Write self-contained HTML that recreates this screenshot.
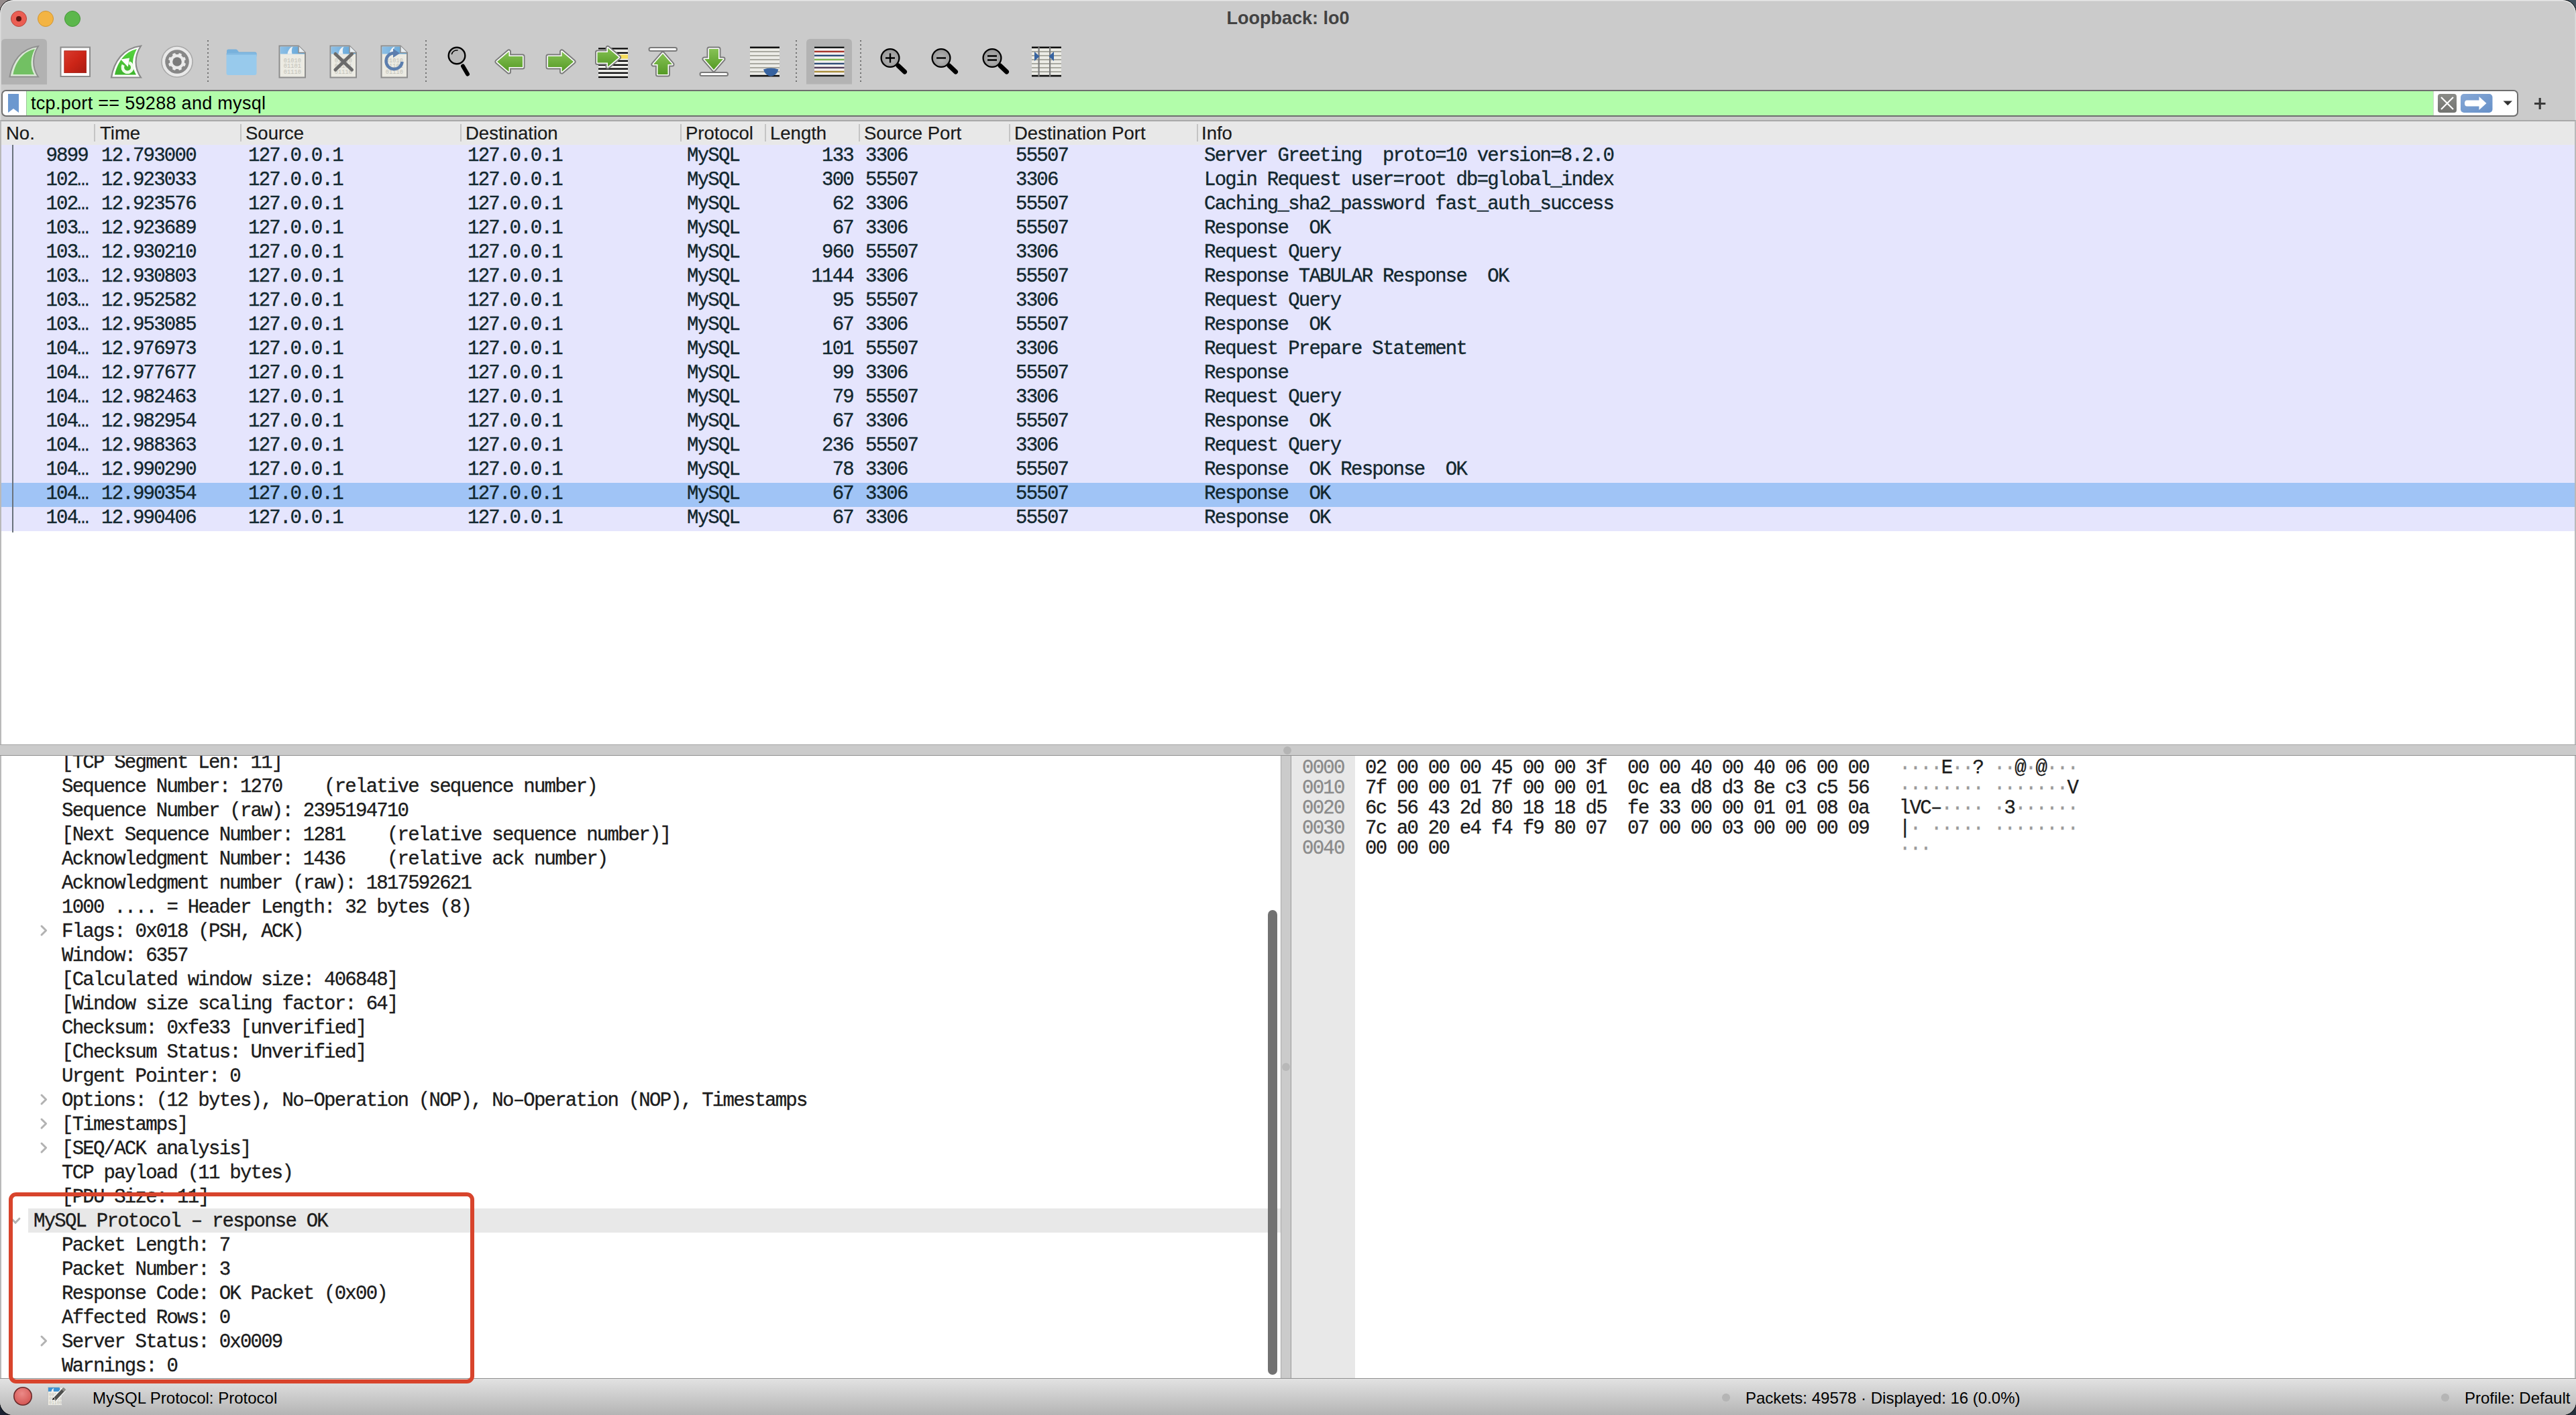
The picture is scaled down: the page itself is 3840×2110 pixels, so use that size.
<!DOCTYPE html><html><head><meta charset="utf-8"><title>Loopback: lo0</title><style>
*{box-sizing:border-box;margin:0;padding:0}
html,body{width:3840px;height:2110px;overflow:hidden;background:#1c2230}
.cn{position:absolute;width:24px;height:24px}
#win{position:absolute;left:0;top:0;width:3840px;height:2110px;border-radius:20px;overflow:hidden;background:#cbcbcb;box-shadow:0 0 0 1px rgba(0,0,0,.85)}
#hl{position:absolute;left:0;top:0;width:3840px;height:179px;border-radius:20px 20px 0 0;box-shadow:inset 0 1.5px 0 rgba(255,255,255,.55),inset 1.5px 0 0 rgba(255,255,255,.35),inset -1.5px 0 0 rgba(255,255,255,.35);pointer-events:none}
.abs{position:absolute}
.sans{font-family:"Liberation Sans",sans-serif}
.mono{font-family:"Liberation Mono",monospace}
#title{position:absolute;left:0;width:3840px;top:10px;height:34px;text-align:center;font:bold 27px/34px "Liberation Sans",sans-serif;color:#424242;letter-spacing:0px}
.tl{position:absolute;top:16px;width:24px;height:24px;border-radius:50%}
.sep{position:absolute;top:60px;width:2px;height:62px;background-image:linear-gradient(#6f6f6f 40%,transparent 40%);background-size:2px 6px}
.icon{position:absolute;top:56px;width:70px;height:70px}
#filter{position:absolute;left:2px;top:134px;width:3752px;height:40px;border:2px solid #6e6e6e;border-radius:7px;background:#fff;overflow:hidden}
#fgreen{position:absolute;left:35px;top:0;width:3589px;border-right:1px solid #c9d9c6;height:36px;background:#b2fdaa;border-left:1px solid #9dc59a}
#ftext{position:absolute;left:46px;top:134px;height:40px;font:27px/40px "Liberation Sans",sans-serif;letter-spacing:0.3px;color:#000}
#plist{position:absolute;left:0;top:179px;width:3840px;height:932px;background:#fff;border-top:2px solid #a9a9a9;border-left:2px solid #b9b9b9;border-right:2px solid #b9b9b9}
#phdr{position:absolute;left:0;top:0;width:3836px;height:35px;background:#e8e8e8}
.hc{position:absolute;top:0;height:35px;font:27.5px/35px "Liberation Sans",sans-serif;color:#1a1a1a;white-space:pre;-webkit-text-stroke:0.2px #1a1a1a}
.hs{position:absolute;top:4px;width:2px;height:26px;background:#c4c4c4}
.row{position:absolute;left:0;width:3836px;height:36px;background:#e5e5fd}
.row.sel{background:#a0c4f6}
.c{position:absolute;top:0;height:36px;font:29px/34px "Liberation Mono",monospace;letter-spacing:-1.76px;color:#12272e;white-space:pre;-webkit-text-stroke:0.35px #12272e}
.r{text-align:right}
#vsplitH{position:absolute;left:0;top:1110px;width:3840px;height:17px;background:#cbcbcb;border-top:1px solid #a4a4a4;border-bottom:1px solid #8f8f8f}
#tree{position:absolute;left:0;top:1127px;width:1909px;height:929px;background:#fff;border-left:2px solid #b9b9b9;overflow:hidden}
.tr{position:absolute;left:0;width:1907px;height:36px;font:29px/36px "Liberation Mono",monospace;letter-spacing:-1.76px;color:#1c1c1c;white-space:pre;-webkit-text-stroke:0.35px #1c1c1c}
#hex{position:absolute;left:1924px;top:1127px;width:1916px;height:929px;background:#fff;border-left:1px solid #9a9a9a;border-right:2px solid #b9b9b9}
#hgut{position:absolute;left:0;top:0;width:95px;height:929px;background:#e8e8e8}
.hx{position:absolute;height:30px;font:29px/30px "Liberation Mono",monospace;letter-spacing:-1.76px;color:#1d1d1d;white-space:pre;-webkit-text-stroke:0.35px currentColor}
#status{position:absolute;left:0;top:2055px;width:3840px;height:55px;background:linear-gradient(#e2e2e2,#b4b4b4);border-top:1px solid #8f8f8f}
.st{position:absolute;font:24px/30px "Liberation Sans",sans-serif;color:#000;white-space:pre}
#anno{position:absolute;left:13px;top:1778px;width:694px;height:285px;border:6px solid #d8442c;border-radius:11px}
</style></head><body><div class="cn" style="left:0;top:0;background:#948a8a"></div><div class="cn" style="right:0;top:0;background:#43525e"></div><div class="cn" style="left:0;bottom:0;background:#1a2232"></div><div class="cn" style="right:0;bottom:0;background:#26323e"></div><div id="win"><div class="tl" style="left:16px;background:#eb5e53;border:1px solid #b5463d"><div style="position:absolute;left:7px;top:7px;width:8px;height:8px;border-radius:50%;background:#5c1510"></div></div><div class="tl" style="left:56px;background:#f3b443;border:1px solid #cf9535"></div><div class="tl" style="left:96px;background:#5cb74c;border:1px solid #46963b"></div><div id="title">Loopback: lo0</div><svg class="abs" style="left:0;top:0" width="1600" height="130" viewBox="0 0 1600 130"><defs>
<linearGradient id="ggreen" x1="0" y1="0" x2="0" y2="1"><stop offset="0" stop-color="#86c255"/><stop offset="1" stop-color="#559a25"/></linearGradient>
<linearGradient id="gred" x1="0" y1="0" x2="1" y2="1"><stop offset="0" stop-color="#d93c2e"/><stop offset="0.5" stop-color="#cc2517"/><stop offset="1" stop-color="#a91b12"/></linearGradient>
<linearGradient id="gblue" x1="0" y1="0" x2="1" y2="0"><stop offset="0" stop-color="#8ec0e6"/><stop offset="1" stop-color="#5fa3d6"/></linearGradient>
<radialGradient id="ggray" cx="0.5" cy="0.55" r="0.6"><stop offset="0" stop-color="#b9b9b9"/><stop offset="1" stop-color="#919191"/></radialGradient>
<linearGradient id="gfin" x1="0" y1="0" x2="0" y2="1"><stop offset="0" stop-color="#55d43f"/><stop offset="1" stop-color="#3fb42e"/></linearGradient>
</defs><path d="M2,126 V64 Q2,58 8,58 H64 Q70,58 70,64 V126 Z" fill="#b2b2b2"/><path d="M14.5,114.5 C18,92 31,72.5 57,69 C48.5,82 47,100 57,114.5 Z" fill="#dbe9d7" stroke="#8f8f8f" stroke-width="2"/><path d="M19.5,111 C23,92.5 34,77 52,73 C45.5,85 44.5,100 51,111 Z" fill="#72c063"/><rect x="90.5" y="70.5" width="43.5" height="43.5" fill="#fff" stroke="#8c8c8c" stroke-width="2"/><rect x="95.8" y="75.8" width="32.8" height="32.8" fill="url(#gred)" stroke="#a3231a" stroke-width="0.8"/><path d="M166,115.5 C170,92 183,72 210,68.5 C200,84 200,101 210,115.5 Z" fill="#fff" stroke="#8a8a8a" stroke-width="2.2"/><path d="M171,111.5 C175,93 186,77 204,73 C196.5,86 196,100 203,111.5 Z" fill="url(#gfin)"/><path d="M183.7,96.9 A7.3,7.3 0 1 0 192.2,93.5" fill="none" stroke="#effde9" stroke-width="4.6"/><path d="M180,88.5 L193,86.5 L190.7,99.7 Z" fill="#fff"/><circle cx="264" cy="92" r="23" fill="#e9e9e9" stroke="#a9a9a9" stroke-width="1.6"/><circle cx="264" cy="92" r="17.8" fill="#878787"/><rect x="261.6" y="78.8" width="4.8" height="5" rx="1.2" fill="#ebebeb" transform="rotate(22.5 264 92)"/><rect x="261.6" y="78.8" width="4.8" height="5" rx="1.2" fill="#ebebeb" transform="rotate(67.5 264 92)"/><rect x="261.6" y="78.8" width="4.8" height="5" rx="1.2" fill="#ebebeb" transform="rotate(112.5 264 92)"/><rect x="261.6" y="78.8" width="4.8" height="5" rx="1.2" fill="#ebebeb" transform="rotate(157.5 264 92)"/><rect x="261.6" y="78.8" width="4.8" height="5" rx="1.2" fill="#ebebeb" transform="rotate(202.5 264 92)"/><rect x="261.6" y="78.8" width="4.8" height="5" rx="1.2" fill="#ebebeb" transform="rotate(247.5 264 92)"/><rect x="261.6" y="78.8" width="4.8" height="5" rx="1.2" fill="#ebebeb" transform="rotate(292.5 264 92)"/><rect x="261.6" y="78.8" width="4.8" height="5" rx="1.2" fill="#ebebeb" transform="rotate(337.5 264 92)"/><circle cx="264" cy="92" r="11" fill="#ebebeb"/><circle cx="264" cy="92" r="6.8" fill="#7b7b7b"/><path d="M338,76 q0,-2.5 2.5,-2.5 h11 q2,0 3,2 l1.5,2 h24 q2.5,0 2.5,2.5 v4 h-44.5 Z" fill="#78b1dc"/><rect x="337.5" y="79.5" width="45" height="32.5" rx="3" fill="#98caec"/><rect x="337.5" y="79.5" width="45" height="2" fill="#80b7e0"/><g>
<path d="M416.5,68.5 h28.5 l10,10 v37 h-38.5 Z" fill="#ecebe3" stroke="#8d8d8d" stroke-width="2"/>
<path d="M417.5,69.5 h27.5 l9,9 v2 h-36.5 Z" fill="url(#gblue)"/>
<path d="M428.5,80.5 c1,-6 4,-10 8,-11 c-2,3 -2,8 -1,11 Z" fill="#eef2f4"/>
<path d="M445.0,68.5 v10 h10" fill="#e8eef2" stroke="#8d8d8d" stroke-width="1.5"/>
<text x="436.0" y="92.5" text-anchor="middle" font-family="Liberation Mono" font-size="8.6" fill="#c2c1b8" letter-spacing="0.1">01010</text>
<text x="436.0" y="101.3" text-anchor="middle" font-family="Liberation Mono" font-size="8.6" fill="#c2c1b8" letter-spacing="0.1">01101</text>
<text x="436.0" y="110.2" text-anchor="middle" font-family="Liberation Mono" font-size="8.6" fill="#c2c1b8" letter-spacing="0.1">01110</text>
</g><g>
<path d="M492.5,68.5 h28.5 l10,10 v37 h-38.5 Z" fill="#ecebe3" stroke="#8d8d8d" stroke-width="2"/>
<path d="M493.5,69.5 h27.5 l9,9 v2 h-36.5 Z" fill="url(#gblue)"/>
<path d="M504.5,80.5 c1,-6 4,-10 8,-11 c-2,3 -2,8 -1,11 Z" fill="#eef2f4"/>
<path d="M521.0,68.5 v10 h10" fill="#e8eef2" stroke="#8d8d8d" stroke-width="1.5"/>
<text x="512.0" y="92.5" text-anchor="middle" font-family="Liberation Mono" font-size="8.6" fill="#c2c1b8" letter-spacing="0.1">01010</text>
<text x="512.0" y="101.3" text-anchor="middle" font-family="Liberation Mono" font-size="8.6" fill="#c2c1b8" letter-spacing="0.1">01101</text>
<text x="512.0" y="110.2" text-anchor="middle" font-family="Liberation Mono" font-size="8.6" fill="#c2c1b8" letter-spacing="0.1">01110</text>
<path d="M500,80.5 L524.5,104 M524.5,80.5 L500,104" stroke="#6b6b6b" stroke-width="5" stroke-linecap="round"/></g><g>
<path d="M568.5,68.5 h28.5 l10,10 v37 h-38.5 Z" fill="#ecebe3" stroke="#8d8d8d" stroke-width="2"/>
<path d="M569.5,69.5 h27.5 l9,9 v2 h-36.5 Z" fill="url(#gblue)"/>
<path d="M580.5,80.5 c1,-6 4,-10 8,-11 c-2,3 -2,8 -1,11 Z" fill="#eef2f4"/>
<path d="M597.0,68.5 v10 h10" fill="#e8eef2" stroke="#8d8d8d" stroke-width="1.5"/>
<text x="588.0" y="92.5" text-anchor="middle" font-family="Liberation Mono" font-size="8.6" fill="#c2c1b8" letter-spacing="0.1">01010</text>
<text x="588.0" y="101.3" text-anchor="middle" font-family="Liberation Mono" font-size="8.6" fill="#c2c1b8" letter-spacing="0.1">01101</text>
<text x="588.0" y="110.2" text-anchor="middle" font-family="Liberation Mono" font-size="8.6" fill="#c2c1b8" letter-spacing="0.1">01110</text>
<path d="M599.5,92 A12,12 0 1 1 588,79" fill="none" stroke="#5c7eae" stroke-width="4.5"/><path d="M586,72.5 L596,79.5 L586,86 Z" fill="#5c7eae"/></g><circle cx="681" cy="83" r="12.3" fill="#b9b9b9" stroke="#000" stroke-width="2.4"/><path d="M673.5,80.5 A8,8 0 0 1 682,75" fill="none" stroke="#000" stroke-width="1.6" stroke-linecap="round"/><line x1="690" y1="98.5" x2="697" y2="110.5" stroke="#000" stroke-width="6" stroke-linecap="round"/><path d="M741,92 L758.5,77 L758.5,84 L779,84 L779,100 L758.5,100 L758.5,107 Z" fill="none" stroke="#7a7a7a" stroke-width="7" stroke-linejoin="round"/><path d="M741,92 L758.5,77 L758.5,84 L779,84 L779,100 L758.5,100 L758.5,107 Z" fill="none" stroke="#fff" stroke-width="3.2" stroke-linejoin="round"/><path d="M741,92 L758.5,77 L758.5,84 L779,84 L779,100 L758.5,100 L758.5,107 Z" fill="url(#ggreen)"/><path d="M855,92 L837.5,77 L837.5,84 L817,84 L817,100 L837.5,100 L837.5,107 Z" fill="none" stroke="#7a7a7a" stroke-width="7" stroke-linejoin="round"/><path d="M855,92 L837.5,77 L837.5,84 L817,84 L817,100 L837.5,100 L837.5,107 Z" fill="none" stroke="#fff" stroke-width="3.2" stroke-linejoin="round"/><path d="M855,92 L837.5,77 L837.5,84 L817,84 L817,100 L837.5,100 L837.5,107 Z" fill="url(#ggreen)"/><rect x="892" y="72" width="44" height="43.5" fill="#ebebe7"/><rect x="892" y="71.4" width="44" height="2.2" fill="#000"/><rect x="892" y="77.80000000000001" width="44" height="2.2" fill="#000"/><rect x="892" y="83.60000000000001" width="44" height="2.2" fill="#000"/><rect x="892" y="89.80000000000001" width="44" height="2.2" fill="#000"/><rect x="892" y="95.80000000000001" width="44" height="2.2" fill="#000"/><rect x="892" y="101.60000000000001" width="44" height="2.2" fill="#000"/><rect x="892" y="107.7" width="44" height="2.2" fill="#000"/><rect x="892" y="113.9" width="44" height="2.2" fill="#000"/><rect x="918" y="81.5" width="18" height="6" fill="#f6dd5a"/><path d="M922.5,85.5 L906,71.5 L906,78 L890.5,78 L890.5,93.5 L906,93.5 L906,99.5 Z" fill="none" stroke="#7a7a7a" stroke-width="7" stroke-linejoin="round"/><path d="M922.5,85.5 L906,71.5 L906,78 L890.5,78 L890.5,93.5 L906,93.5 L906,99.5 Z" fill="none" stroke="#fff" stroke-width="3.2" stroke-linejoin="round"/><path d="M922.5,85.5 L906,71.5 L906,78 L890.5,78 L890.5,93.5 L906,93.5 L906,99.5 Z" fill="url(#ggreen)"/><rect x="967.5" y="71" width="41.5" height="5" rx="2.5" fill="#fff" stroke="#7a7a7a" stroke-width="2"/><path d="M988,80 L974,96 L980.5,96 L980.5,111 L995.5,111 L995.5,96 L1002,96 Z" fill="none" stroke="#7a7a7a" stroke-width="7" stroke-linejoin="round"/><path d="M988,80 L974,96 L980.5,96 L980.5,111 L995.5,111 L995.5,96 L1002,96 Z" fill="none" stroke="#fff" stroke-width="3.2" stroke-linejoin="round"/><path d="M988,80 L974,96 L980.5,96 L980.5,111 L995.5,111 L995.5,96 L1002,96 Z" fill="url(#ggreen)"/><path d="M1064,104 L1050,88 L1057,88 L1057,73 L1071,73 L1071,88 L1078,88 Z" fill="none" stroke="#7a7a7a" stroke-width="7" stroke-linejoin="round"/><path d="M1064,104 L1050,88 L1057,88 L1057,73 L1071,73 L1071,88 L1078,88 Z" fill="none" stroke="#fff" stroke-width="3.2" stroke-linejoin="round"/><path d="M1064,104 L1050,88 L1057,88 L1057,73 L1071,73 L1071,88 L1078,88 Z" fill="url(#ggreen)"/><rect x="1043.5" y="108" width="41.5" height="5" rx="2.5" fill="#fff" stroke="#7a7a7a" stroke-width="2"/><rect x="1118" y="70" width="44" height="44" fill="#ecece7"/><rect x="1118" y="69.5" width="44" height="2.6" fill="#111"/><rect x="1118" y="111.8" width="44" height="2.6" fill="#111"/><rect x="1118" y="76" width="44" height="2" fill="#a9a9a0"/><rect x="1118" y="82" width="44" height="2" fill="#a9a9a0"/><rect x="1118" y="88" width="44" height="2" fill="#a9a9a0"/><rect x="1118" y="94" width="44" height="2" fill="#a9a9a0"/><rect x="1118" y="100" width="44" height="2" fill="#a9a9a0"/><rect x="1118" y="106" width="44" height="2" fill="#a9a9a0"/><path d="M1138,103.5 Q1149,99.5 1160.5,103.5 Q1158,112.5 1149.2,113.8 Q1140.5,112.5 1138,103.5 Z" fill="#3763a0"/><path d="M1202,125.5 V64 Q1202,58 1208,58 H1264 Q1270,58 1270,64 V125.5 Z" fill="#b3b3b3"/><rect x="1214" y="70" width="44.5" height="44" fill="#f3f0f0"/><rect x="1214" y="69.6" width="44.5" height="2.4" fill="#161a1a"/><rect x="1214" y="75.7" width="44.5" height="2.4" fill="#a8352b"/><rect x="1214" y="81.7" width="44.5" height="2.4" fill="#2d4b76"/><rect x="1214" y="87.7" width="44.5" height="2.4" fill="#7db44c"/><rect x="1214" y="93.7" width="44.5" height="2.4" fill="#2d4b76"/><rect x="1214" y="99.7" width="44.5" height="2.4" fill="#4d3c58"/><rect x="1214" y="105.7" width="44.5" height="2.4" fill="#a98e3a"/><rect x="1214" y="111.7" width="44.5" height="2.4" fill="#161a1a"/><circle cx="1327" cy="86.5" r="13.4" fill="url(#ggray)" stroke="#000" stroke-width="2.3"/>
<line x1="1339" y1="98.0" x2="1348.5" y2="107.0" stroke="#000" stroke-width="7" stroke-linecap="round"/><path d="M1320,86.5 h14 M1327,79.5 v14" stroke="#000" stroke-width="2.4"/><circle cx="1403" cy="86.5" r="13.4" fill="url(#ggray)" stroke="#000" stroke-width="2.3"/>
<line x1="1415" y1="98.0" x2="1424.5" y2="107.0" stroke="#000" stroke-width="7" stroke-linecap="round"/><path d="M1396,86.5 h14" stroke="#000" stroke-width="2.4"/><circle cx="1479" cy="86.5" r="13.4" fill="url(#ggray)" stroke="#000" stroke-width="2.3"/>
<line x1="1491" y1="98.0" x2="1500.5" y2="107.0" stroke="#000" stroke-width="7" stroke-linecap="round"/><path d="M1472,83.5 h14 M1472,89.5 h14" stroke="#000" stroke-width="2.4"/><rect x="1538" y="70" width="44" height="44" fill="#ecece7"/><rect x="1538" y="76" width="44" height="2" fill="#a9a9a0"/><rect x="1538" y="82" width="44" height="2" fill="#a9a9a0"/><rect x="1538" y="88" width="44" height="2" fill="#a9a9a0"/><rect x="1538" y="94" width="44" height="2" fill="#a9a9a0"/><rect x="1538" y="100" width="44" height="2" fill="#a9a9a0"/><rect x="1538" y="106" width="44" height="2" fill="#a9a9a0"/><rect x="1538" y="69.5" width="44" height="2.6" fill="#111"/><rect x="1538" y="111.8" width="44" height="2.6" fill="#111"/><rect x="1547.5" y="70" width="2.2" height="44" fill="#7d7d7d"/><rect x="1564" y="70" width="2.2" height="44" fill="#7d7d7d"/><path d="M1542,77 L1549.5,84 L1542,91 Z" fill="#3763a0"/><path d="M1571,77 L1563.5,84 L1571,91 Z" fill="#3763a0"/></svg><div class="sep" style="left:309px"></div><div class="sep" style="left:634px"></div><div class="sep" style="left:1186px"></div><div class="sep" style="left:1282px"></div><div id="filter"><div id="fgreen"></div></div><svg class="abs" style="left:0;top:130px" width="60" height="50"><path d="M12,10 h16 v28 l-8,-6 l-8,6 Z" fill="#6c98cf"/></svg><div id="ftext">tcp.port == 59288 and mysql</div><svg class="abs" style="left:3620px;top:130px" width="220" height="50" viewBox="3620 130 220 50">
<defs><linearGradient id="gx" x1="0" y1="0" x2="0" y2="1"><stop offset="0" stop-color="#8a8b87"/><stop offset="1" stop-color="#727370"/></linearGradient>
<linearGradient id="ga" x1="0" y1="0" x2="1" y2="1"><stop offset="0" stop-color="#86a8d6"/><stop offset="1" stop-color="#6690c8"/></linearGradient></defs>
<rect x="3634" y="140" width="28" height="28" rx="4" fill="url(#gx)"/>
<path d="M3639,145 L3657,163 M3657,145 L3639,163" stroke="#fff" stroke-width="2.2"/>
<rect x="3668" y="140" width="47.5" height="28" rx="5" fill="url(#ga)"/>
<path d="M3677.5,149.5 h18 v-5.5 l11,10 l-11,10 v-5.5 h-18 q-3.5,0 -3.5,-4.5 q0,-4.5 3.5,-4.5 Z" fill="#fff"/>
<path d="M3731.5,150.5 h13.5 l-6.75,6.8 Z" fill="#333"/>
<path d="M3778,154.5 h16.5 M3786.2,146 v17" stroke="#3a3a3a" stroke-width="3.2"/>
</svg><div id="plist"><div id="phdr"><div class="hc" style="left:7px">No.</div><div class="hc" style="left:147px">Time</div><div class="hs" style="left:138px"></div><div class="hc" style="left:364px">Source</div><div class="hs" style="left:356px"></div><div class="hc" style="left:692px">Destination</div><div class="hs" style="left:684px"></div><div class="hc" style="left:1020px">Protocol</div><div class="hs" style="left:1012px"></div><div class="hc" style="left:1146px">Length</div><div class="hs" style="left:1138px"></div><div class="hc" style="left:1286px">Source Port</div><div class="hs" style="left:1278px"></div><div class="hc" style="left:1510px">Destination Port</div><div class="hs" style="left:1502px"></div><div class="hc" style="left:1789px">Info</div><div class="hs" style="left:1782px"></div></div><div class="row" style="top:35px"><div class="c r" style="left:0;width:129px">9899</div><div class="c" style="left:149px">12.793000</div><div class="c" style="left:368px">127.0.0.1</div><div class="c" style="left:695px">127.0.0.1</div><div class="c" style="left:1022px">MySQL</div><div class="c r" style="left:1141px;width:129px">133</div><div class="c" style="left:1288px">3306</div><div class="c" style="left:1512px">55507</div><div class="c" style="left:1793px">Server Greeting  proto=10 version=8.2.0</div></div><div class="row" style="top:71px"><div class="c r" style="left:0;width:129px">102…</div><div class="c" style="left:149px">12.923033</div><div class="c" style="left:368px">127.0.0.1</div><div class="c" style="left:695px">127.0.0.1</div><div class="c" style="left:1022px">MySQL</div><div class="c r" style="left:1141px;width:129px">300</div><div class="c" style="left:1288px">55507</div><div class="c" style="left:1512px">3306</div><div class="c" style="left:1793px">Login Request user=root db=global_index</div></div><div class="row" style="top:107px"><div class="c r" style="left:0;width:129px">102…</div><div class="c" style="left:149px">12.923576</div><div class="c" style="left:368px">127.0.0.1</div><div class="c" style="left:695px">127.0.0.1</div><div class="c" style="left:1022px">MySQL</div><div class="c r" style="left:1141px;width:129px">62</div><div class="c" style="left:1288px">3306</div><div class="c" style="left:1512px">55507</div><div class="c" style="left:1793px">Caching_sha2_password fast_auth_success</div></div><div class="row" style="top:143px"><div class="c r" style="left:0;width:129px">103…</div><div class="c" style="left:149px">12.923689</div><div class="c" style="left:368px">127.0.0.1</div><div class="c" style="left:695px">127.0.0.1</div><div class="c" style="left:1022px">MySQL</div><div class="c r" style="left:1141px;width:129px">67</div><div class="c" style="left:1288px">3306</div><div class="c" style="left:1512px">55507</div><div class="c" style="left:1793px">Response  OK</div></div><div class="row" style="top:179px"><div class="c r" style="left:0;width:129px">103…</div><div class="c" style="left:149px">12.930210</div><div class="c" style="left:368px">127.0.0.1</div><div class="c" style="left:695px">127.0.0.1</div><div class="c" style="left:1022px">MySQL</div><div class="c r" style="left:1141px;width:129px">960</div><div class="c" style="left:1288px">55507</div><div class="c" style="left:1512px">3306</div><div class="c" style="left:1793px">Request Query</div></div><div class="row" style="top:215px"><div class="c r" style="left:0;width:129px">103…</div><div class="c" style="left:149px">12.930803</div><div class="c" style="left:368px">127.0.0.1</div><div class="c" style="left:695px">127.0.0.1</div><div class="c" style="left:1022px">MySQL</div><div class="c r" style="left:1141px;width:129px">1144</div><div class="c" style="left:1288px">3306</div><div class="c" style="left:1512px">55507</div><div class="c" style="left:1793px">Response TABULAR Response  OK</div></div><div class="row" style="top:251px"><div class="c r" style="left:0;width:129px">103…</div><div class="c" style="left:149px">12.952582</div><div class="c" style="left:368px">127.0.0.1</div><div class="c" style="left:695px">127.0.0.1</div><div class="c" style="left:1022px">MySQL</div><div class="c r" style="left:1141px;width:129px">95</div><div class="c" style="left:1288px">55507</div><div class="c" style="left:1512px">3306</div><div class="c" style="left:1793px">Request Query</div></div><div class="row" style="top:287px"><div class="c r" style="left:0;width:129px">103…</div><div class="c" style="left:149px">12.953085</div><div class="c" style="left:368px">127.0.0.1</div><div class="c" style="left:695px">127.0.0.1</div><div class="c" style="left:1022px">MySQL</div><div class="c r" style="left:1141px;width:129px">67</div><div class="c" style="left:1288px">3306</div><div class="c" style="left:1512px">55507</div><div class="c" style="left:1793px">Response  OK</div></div><div class="row" style="top:323px"><div class="c r" style="left:0;width:129px">104…</div><div class="c" style="left:149px">12.976973</div><div class="c" style="left:368px">127.0.0.1</div><div class="c" style="left:695px">127.0.0.1</div><div class="c" style="left:1022px">MySQL</div><div class="c r" style="left:1141px;width:129px">101</div><div class="c" style="left:1288px">55507</div><div class="c" style="left:1512px">3306</div><div class="c" style="left:1793px">Request Prepare Statement</div></div><div class="row" style="top:359px"><div class="c r" style="left:0;width:129px">104…</div><div class="c" style="left:149px">12.977677</div><div class="c" style="left:368px">127.0.0.1</div><div class="c" style="left:695px">127.0.0.1</div><div class="c" style="left:1022px">MySQL</div><div class="c r" style="left:1141px;width:129px">99</div><div class="c" style="left:1288px">3306</div><div class="c" style="left:1512px">55507</div><div class="c" style="left:1793px">Response</div></div><div class="row" style="top:395px"><div class="c r" style="left:0;width:129px">104…</div><div class="c" style="left:149px">12.982463</div><div class="c" style="left:368px">127.0.0.1</div><div class="c" style="left:695px">127.0.0.1</div><div class="c" style="left:1022px">MySQL</div><div class="c r" style="left:1141px;width:129px">79</div><div class="c" style="left:1288px">55507</div><div class="c" style="left:1512px">3306</div><div class="c" style="left:1793px">Request Query</div></div><div class="row" style="top:431px"><div class="c r" style="left:0;width:129px">104…</div><div class="c" style="left:149px">12.982954</div><div class="c" style="left:368px">127.0.0.1</div><div class="c" style="left:695px">127.0.0.1</div><div class="c" style="left:1022px">MySQL</div><div class="c r" style="left:1141px;width:129px">67</div><div class="c" style="left:1288px">3306</div><div class="c" style="left:1512px">55507</div><div class="c" style="left:1793px">Response  OK</div></div><div class="row" style="top:467px"><div class="c r" style="left:0;width:129px">104…</div><div class="c" style="left:149px">12.988363</div><div class="c" style="left:368px">127.0.0.1</div><div class="c" style="left:695px">127.0.0.1</div><div class="c" style="left:1022px">MySQL</div><div class="c r" style="left:1141px;width:129px">236</div><div class="c" style="left:1288px">55507</div><div class="c" style="left:1512px">3306</div><div class="c" style="left:1793px">Request Query</div></div><div class="row" style="top:503px"><div class="c r" style="left:0;width:129px">104…</div><div class="c" style="left:149px">12.990290</div><div class="c" style="left:368px">127.0.0.1</div><div class="c" style="left:695px">127.0.0.1</div><div class="c" style="left:1022px">MySQL</div><div class="c r" style="left:1141px;width:129px">78</div><div class="c" style="left:1288px">3306</div><div class="c" style="left:1512px">55507</div><div class="c" style="left:1793px">Response  OK Response  OK</div></div><div class="row sel" style="top:539px"><div class="c r" style="left:0;width:129px">104…</div><div class="c" style="left:149px">12.990354</div><div class="c" style="left:368px">127.0.0.1</div><div class="c" style="left:695px">127.0.0.1</div><div class="c" style="left:1022px">MySQL</div><div class="c r" style="left:1141px;width:129px">67</div><div class="c" style="left:1288px">3306</div><div class="c" style="left:1512px">55507</div><div class="c" style="left:1793px">Response  OK</div></div><div class="row" style="top:575px"><div class="c r" style="left:0;width:129px">104…</div><div class="c" style="left:149px">12.990406</div><div class="c" style="left:368px">127.0.0.1</div><div class="c" style="left:695px">127.0.0.1</div><div class="c" style="left:1022px">MySQL</div><div class="c r" style="left:1141px;width:129px">67</div><div class="c" style="left:1288px">3306</div><div class="c" style="left:1512px">55507</div><div class="c" style="left:1793px">Response  OK</div></div><div class="abs" style="left:16px;top:35px;width:2px;height:578px;background:#6a737c"></div></div><div id="vsplitH"><div class="abs" style="left:1913px;top:2px;width:12px;height:12px;border-radius:50%;background:#b4b4b4"></div></div><div id="tree"><div class="tr" style="left:90px;top:-7px">[TCP Segment Len: 11]</div><div class="tr" style="left:90px;top:29px">Sequence Number: 1270    (relative sequence number)</div><div class="tr" style="left:90px;top:65px">Sequence Number (raw): 2395194710</div><div class="tr" style="left:90px;top:101px">[Next Sequence Number: 1281    (relative sequence number)]</div><div class="tr" style="left:90px;top:137px">Acknowledgment Number: 1436    (relative ack number)</div><div class="tr" style="left:90px;top:173px">Acknowledgment number (raw): 1817592621</div><div class="tr" style="left:90px;top:209px">1000 .... = Header Length: 32 bytes (8)</div><svg class="abs" style="left:54px;top:243px" width="24" height="36"><path d="M6,11 L12.6,17.5 L6,24" fill="none" stroke="#b2b2b2" stroke-width="3" stroke-linecap="round" stroke-linejoin="round"/></svg><div class="tr" style="left:90px;top:245px">Flags: 0x018 (PSH, ACK)</div><div class="tr" style="left:90px;top:281px">Window: 6357</div><div class="tr" style="left:90px;top:317px">[Calculated window size: 406848]</div><div class="tr" style="left:90px;top:353px">[Window size scaling factor: 64]</div><div class="tr" style="left:90px;top:389px">Checksum: 0xfe33 [unverified]</div><div class="tr" style="left:90px;top:425px">[Checksum Status: Unverified]</div><div class="tr" style="left:90px;top:461px">Urgent Pointer: 0</div><svg class="abs" style="left:54px;top:495px" width="24" height="36"><path d="M6,11 L12.6,17.5 L6,24" fill="none" stroke="#b2b2b2" stroke-width="3" stroke-linecap="round" stroke-linejoin="round"/></svg><div class="tr" style="left:90px;top:497px">Options: (12 bytes), No–Operation (NOP), No–Operation (NOP), Timestamps</div><svg class="abs" style="left:54px;top:531px" width="24" height="36"><path d="M6,11 L12.6,17.5 L6,24" fill="none" stroke="#b2b2b2" stroke-width="3" stroke-linecap="round" stroke-linejoin="round"/></svg><div class="tr" style="left:90px;top:533px">[Timestamps]</div><svg class="abs" style="left:54px;top:567px" width="24" height="36"><path d="M6,11 L12.6,17.5 L6,24" fill="none" stroke="#b2b2b2" stroke-width="3" stroke-linecap="round" stroke-linejoin="round"/></svg><div class="tr" style="left:90px;top:569px">[SEQ/ACK analysis]</div><div class="tr" style="left:90px;top:605px">TCP payload (11 bytes)</div><div class="tr" style="left:90px;top:641px">[PDU Size: 11]</div><div class="abs" style="left:40px;top:675px;width:1867px;height:36px;background:#e8e8e8"></div><svg class="abs" style="left:14px;top:675px" width="24" height="36"><path d="M1.2,15.2 L7,21.3 L12.8,15.2" fill="none" stroke="#b2b2b2" stroke-width="3" stroke-linecap="round" stroke-linejoin="round"/></svg><div class="tr" style="left:48px;top:677px">MySQL Protocol – response OK</div><div class="tr" style="left:90px;top:713px">Packet Length: 7</div><div class="tr" style="left:90px;top:749px">Packet Number: 3</div><div class="tr" style="left:90px;top:785px">Response Code: OK Packet (0x00)</div><div class="tr" style="left:90px;top:821px">Affected Rows: 0</div><svg class="abs" style="left:54px;top:855px" width="24" height="36"><path d="M6,11 L12.6,17.5 L6,24" fill="none" stroke="#b2b2b2" stroke-width="3" stroke-linecap="round" stroke-linejoin="round"/></svg><div class="tr" style="left:90px;top:857px">Server Status: 0x0009</div><div class="tr" style="left:90px;top:893px">Warnings: 0</div><div class="abs" style="left:1888px;top:230px;width:14px;height:693px;border-radius:7px;background:#727272"></div></div><div class="abs" style="left:1909px;top:1127px;width:15px;height:928px;background:#cbcbcb;border-left:1px solid #a8a8a8"><div class="abs" style="left:1px;top:458px;width:12px;height:12px;border-radius:50%;background:#b8b8b8"></div></div><div id="hex"><div id="hgut"></div><div class="hx" style="left:16px;top:4px;color:#8a8a8a">0000</div><div class="hx" style="left:110px;top:4px">02 00 00 00 45 00 00 3f  00 00 40 00 40 06 00 00</div><div class="hx" style="left:906px;top:4px"><span style="color:#9a9a9a;-webkit-text-stroke:0.3px #9a9a9a">·</span><span style="color:#9a9a9a;-webkit-text-stroke:0.3px #9a9a9a">·</span><span style="color:#9a9a9a;-webkit-text-stroke:0.3px #9a9a9a">·</span><span style="color:#9a9a9a;-webkit-text-stroke:0.3px #9a9a9a">·</span>E<span style="color:#9a9a9a;-webkit-text-stroke:0.3px #9a9a9a">·</span><span style="color:#9a9a9a;-webkit-text-stroke:0.3px #9a9a9a">·</span>? <span style="color:#9a9a9a;-webkit-text-stroke:0.3px #9a9a9a">·</span><span style="color:#9a9a9a;-webkit-text-stroke:0.3px #9a9a9a">·</span>@<span style="color:#9a9a9a;-webkit-text-stroke:0.3px #9a9a9a">·</span>@<span style="color:#9a9a9a;-webkit-text-stroke:0.3px #9a9a9a">·</span><span style="color:#9a9a9a;-webkit-text-stroke:0.3px #9a9a9a">·</span><span style="color:#9a9a9a;-webkit-text-stroke:0.3px #9a9a9a">·</span></div><div class="hx" style="left:16px;top:34px;color:#8a8a8a">0010</div><div class="hx" style="left:110px;top:34px">7f 00 00 01 7f 00 00 01  0c ea d8 d3 8e c3 c5 56</div><div class="hx" style="left:906px;top:34px"><span style="color:#9a9a9a;-webkit-text-stroke:0.3px #9a9a9a">·</span><span style="color:#9a9a9a;-webkit-text-stroke:0.3px #9a9a9a">·</span><span style="color:#9a9a9a;-webkit-text-stroke:0.3px #9a9a9a">·</span><span style="color:#9a9a9a;-webkit-text-stroke:0.3px #9a9a9a">·</span><span style="color:#9a9a9a;-webkit-text-stroke:0.3px #9a9a9a">·</span><span style="color:#9a9a9a;-webkit-text-stroke:0.3px #9a9a9a">·</span><span style="color:#9a9a9a;-webkit-text-stroke:0.3px #9a9a9a">·</span><span style="color:#9a9a9a;-webkit-text-stroke:0.3px #9a9a9a">·</span> <span style="color:#9a9a9a;-webkit-text-stroke:0.3px #9a9a9a">·</span><span style="color:#9a9a9a;-webkit-text-stroke:0.3px #9a9a9a">·</span><span style="color:#9a9a9a;-webkit-text-stroke:0.3px #9a9a9a">·</span><span style="color:#9a9a9a;-webkit-text-stroke:0.3px #9a9a9a">·</span><span style="color:#9a9a9a;-webkit-text-stroke:0.3px #9a9a9a">·</span><span style="color:#9a9a9a;-webkit-text-stroke:0.3px #9a9a9a">·</span><span style="color:#9a9a9a;-webkit-text-stroke:0.3px #9a9a9a">·</span>V</div><div class="hx" style="left:16px;top:64px;color:#8a8a8a">0020</div><div class="hx" style="left:110px;top:64px">6c 56 43 2d 80 18 18 d5  fe 33 00 00 01 01 08 0a</div><div class="hx" style="left:906px;top:64px">lVC–<span style="color:#9a9a9a;-webkit-text-stroke:0.3px #9a9a9a">·</span><span style="color:#9a9a9a;-webkit-text-stroke:0.3px #9a9a9a">·</span><span style="color:#9a9a9a;-webkit-text-stroke:0.3px #9a9a9a">·</span><span style="color:#9a9a9a;-webkit-text-stroke:0.3px #9a9a9a">·</span> <span style="color:#9a9a9a;-webkit-text-stroke:0.3px #9a9a9a">·</span>3<span style="color:#9a9a9a;-webkit-text-stroke:0.3px #9a9a9a">·</span><span style="color:#9a9a9a;-webkit-text-stroke:0.3px #9a9a9a">·</span><span style="color:#9a9a9a;-webkit-text-stroke:0.3px #9a9a9a">·</span><span style="color:#9a9a9a;-webkit-text-stroke:0.3px #9a9a9a">·</span><span style="color:#9a9a9a;-webkit-text-stroke:0.3px #9a9a9a">·</span><span style="color:#9a9a9a;-webkit-text-stroke:0.3px #9a9a9a">·</span></div><div class="hx" style="left:16px;top:94px;color:#8a8a8a">0030</div><div class="hx" style="left:110px;top:94px">7c a0 20 e4 f4 f9 80 07  07 00 00 03 00 00 00 09</div><div class="hx" style="left:906px;top:94px">|<span style="color:#9a9a9a;-webkit-text-stroke:0.3px #9a9a9a">·</span> <span style="color:#9a9a9a;-webkit-text-stroke:0.3px #9a9a9a">·</span><span style="color:#9a9a9a;-webkit-text-stroke:0.3px #9a9a9a">·</span><span style="color:#9a9a9a;-webkit-text-stroke:0.3px #9a9a9a">·</span><span style="color:#9a9a9a;-webkit-text-stroke:0.3px #9a9a9a">·</span><span style="color:#9a9a9a;-webkit-text-stroke:0.3px #9a9a9a">·</span> <span style="color:#9a9a9a;-webkit-text-stroke:0.3px #9a9a9a">·</span><span style="color:#9a9a9a;-webkit-text-stroke:0.3px #9a9a9a">·</span><span style="color:#9a9a9a;-webkit-text-stroke:0.3px #9a9a9a">·</span><span style="color:#9a9a9a;-webkit-text-stroke:0.3px #9a9a9a">·</span><span style="color:#9a9a9a;-webkit-text-stroke:0.3px #9a9a9a">·</span><span style="color:#9a9a9a;-webkit-text-stroke:0.3px #9a9a9a">·</span><span style="color:#9a9a9a;-webkit-text-stroke:0.3px #9a9a9a">·</span><span style="color:#9a9a9a;-webkit-text-stroke:0.3px #9a9a9a">·</span></div><div class="hx" style="left:16px;top:124px;color:#8a8a8a">0040</div><div class="hx" style="left:110px;top:124px">00 00 00</div><div class="hx" style="left:906px;top:124px"><span style="color:#9a9a9a;-webkit-text-stroke:0.3px #9a9a9a">·</span><span style="color:#9a9a9a;-webkit-text-stroke:0.3px #9a9a9a">·</span><span style="color:#9a9a9a;-webkit-text-stroke:0.3px #9a9a9a">·</span></div></div><div id="status"></div><svg class="abs" style="left:0;top:2056px" width="120" height="54"><defs><radialGradient id="grc" cx="0.45" cy="0.35" r="0.7"><stop offset="0" stop-color="#eb8a88"/><stop offset="1" stop-color="#d2524f"/></radialGradient></defs><circle cx="34" cy="26" r="13.2" fill="url(#grc)" stroke="#6a2b2b" stroke-width="1.6"/><rect x="71.5" y="12.5" width="21" height="27" fill="#efeee8" stroke="#c4c4c4" stroke-width="1"/><path d="M72,13 h16 q1.5,0 1.5,1.5 v4.5 h-17.5 Z" fill="#3f92d2"/><path d="M76.5,19 c0.5,-3 2,-4.5 4,-5 c-1,1.5 -1,3.5 -0.5,5 Z" fill="#eef2f4"/><text x="73" y="26" font-family="Liberation Mono" font-size="6.5" fill="#bdbdb5">00101</text><text x="73" y="32" font-family="Liberation Mono" font-size="6.5" fill="#bdbdb5">00110</text><text x="73" y="38" font-family="Liberation Mono" font-size="6.5" fill="#bdbdb5">01100</text><path d="M81,31 L95.5,15.5" stroke="#fff" stroke-width="7.5"/><path d="M81,31 L95.5,15.5" stroke="#4f504e" stroke-width="5.2"/><path d="M93.5,17.5 L96.5,14.5" stroke="#8a8a86" stroke-width="5.2"/><path d="M77,32.5 L79,27.5 L82.5,30.5 Z" fill="#000" stroke="#fff" stroke-width="0.8"/></svg><div class="st" style="left:138px;top:2070px">MySQL Protocol: Protocol</div><div class="abs" style="left:2567px;top:2078px;width:11.5px;height:11.5px;border-radius:50%;background:#b5b5b5"></div><div class="st" style="left:2602px;top:2070px">Packets: 49578 · Displayed: 16 (0.0%)</div><div class="abs" style="left:3639px;top:2078px;width:11.5px;height:11.5px;border-radius:50%;background:#b5b5b5"></div><div class="st" style="left:3674px;top:2070px">Profile: Default</div><div id="anno"></div><div id="hl"></div></div></body></html>
